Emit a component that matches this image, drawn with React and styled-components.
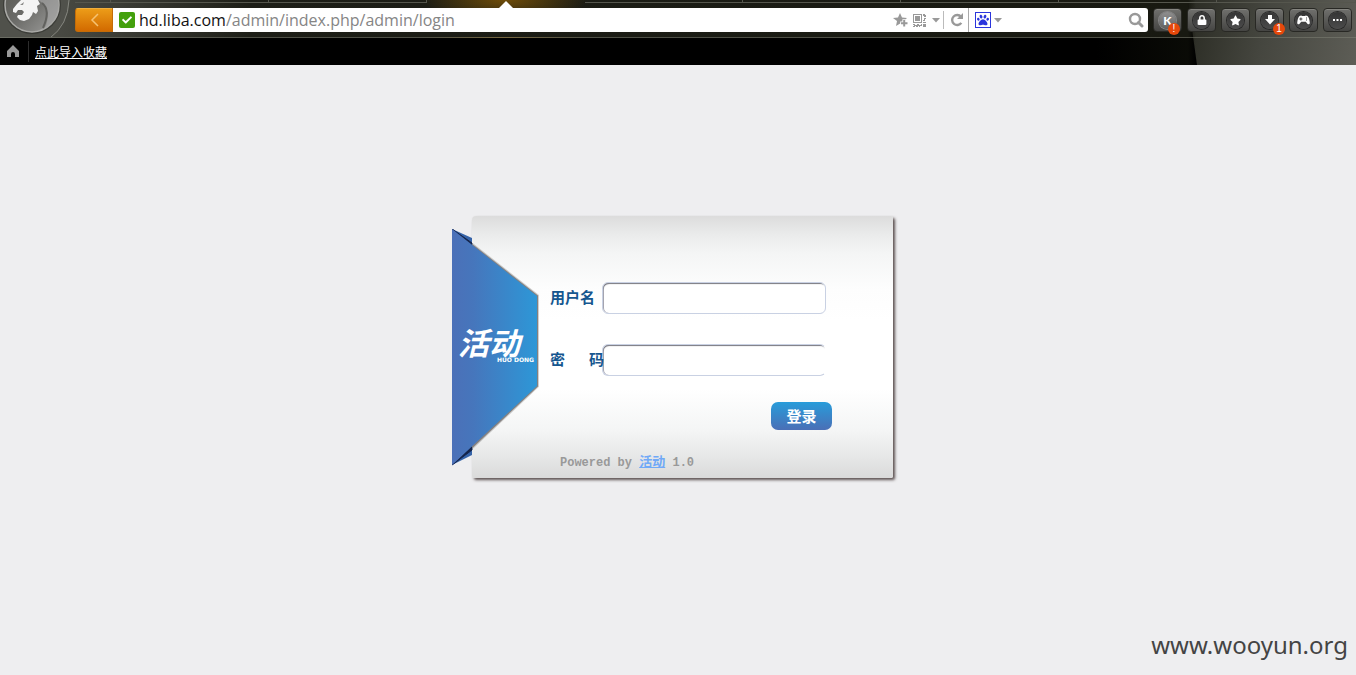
import React from "react";
import styled, { createGlobalStyle } from "styled-components";
import { FaLock, FaStar, FaPaw, FaCheck } from "react-icons/fa";

const GlobalStyle = createGlobalStyle`
  *, *::before, *::after { box-sizing: border-box; }
  html, body, #root { height: 100%; }
  body {
    margin: 0;
    background: #eeeef0;
    font-family: "Noto Sans", "Noto Sans CJK SC", sans-serif;
  }
  button { padding: 0; border: 0; cursor: pointer; font: inherit; }
  svg { display: block; flex: none; }
`;

const Page = styled.div`
  position: relative;
  display: flex;
  flex-direction: column;
  min-height: 100%;
`;

/* ---------- browser header ---------- */

const Header = styled.header`
  position: relative;
  background: #000;
  isolation: isolate;
  &::after {
    content: "";
    position: absolute;
    z-index: -1;
    inset: 0 0 0 auto;
    width: 168px;
    background: linear-gradient(100deg, #2a2b23 0, #45463f 45%, #5d5d56 100%);
    clip-path: polygon(0 0, 100% 0, 100% 100%, 9px 100%);
  }
`;

const Chrome = styled.div`
  display: flex;
  height: 38px;
  border-bottom: 1px solid rgba(130, 132, 120, 0.5);
  background:
    radial-gradient(ellipse 82px 22px at 505px 0, #6e4c08 0, transparent 100%),
    linear-gradient(90deg, #565751 0, #45463f 75px, #1d1e17 250px, #181911 calc(100% - 168px), transparent calc(100% - 160px));
`;

const MenuButton = styled.button`
  flex: none;
  width: 75px;
  height: 37px;
  overflow: hidden;
  background: transparent;
`;

const ChromeMain = styled.div`
  flex: 1;
  min-width: 0;
`;

const Tabs = styled.div`
  display: flex;
  height: 8px;
`;

const Tab = styled.div`
  flex: ${(p) => (p.$grow ? "1 1 0" : "none")};
  width: ${(p) => p.$width || 158}px;
  height: 3px;
  border-bottom: 1px solid #55564d;
  border-right: 1px solid #55564d;
`;

const ActiveTab = styled.div`
  display: flex;
  flex: none;
  align-items: flex-end;
  justify-content: center;
  width: 158px;
  height: 8px;
  &::after {
    content: "";
    border: 7px solid transparent;
    border-top: 0;
    border-bottom-color: #fff;
  }
`;

const Toolbar = styled.div`
  display: flex;
  height: 24px;
  padding-right: 4px;
`;

const BackButton = styled.button`
  display: grid;
  place-items: center;
  flex: none;
  width: 38px;
  border: 1px solid #c46c08;
  border-top-color: #f0ae3c;
  border-radius: 3px 0 0 3px;
  background: linear-gradient(#ec9c18, #d26a00);
`;

const AddressBar = styled.div`
  display: flex;
  flex: 1;
  align-items: center;
  min-width: 0;
  padding: 0 4px 0 6px;
  background: #fff;
  color: #999;
`;

const Verified = styled.span`
  display: grid;
  place-items: center;
  flex: none;
  width: 16px;
  height: 16px;
  margin-right: 4px;
  border-radius: 2px;
  background: #43a00c;
  color: #fff;
`;

const Host = styled.label`
  color: #111;
  font: 16px/24px "Open Sans", sans-serif;
`;

const PathInput = styled.input`
  flex: 1;
  min-width: 0;
  padding: 0;
  border: 0;
  outline: 0;
  background: transparent;
  color: #858585;
  font: 16px/24px "Open Sans", sans-serif;
`;

const IconButton = styled.button`
  display: grid;
  place-items: center;
  flex: none;
  width: ${(p) => p.$width || 18}px;
  height: 20px;
  background: transparent;
  color: #999;
`;

const Separator = styled.span`
  flex: none;
  width: 1px;
  height: 18px;
  margin-right: 5px;
  background: #bbb;
`;

const SearchBar = styled.div`
  display: flex;
  flex: none;
  align-items: center;
  width: 180px;
  margin-right: 5px;
  padding: 0 3px 0 6px;
  border-left: 1px solid #aaa;
  border-radius: 0 3px 3px 0;
  background: #fff;
`;

const Engine = styled.span`
  display: grid;
  place-items: center;
  flex: none;
  width: 16px;
  height: 16px;
  border: 1px solid #2b35dc;
  color: #2b35dc;
`;

const SearchInput = styled.input`
  flex: 1;
  min-width: 0;
  border: 0;
  outline: 0;
  background: transparent;
`;

const Tools = styled.div`
  display: flex;
  gap: 5px;
`;

const ToolButton = styled.button`
  position: relative;
  display: grid;
  place-items: center;
  width: 29px;
  height: 24px;
  border: 1px solid #282824;
  border-radius: 4px;
  background: linear-gradient(#70706d, #454543);
  box-shadow: inset 0 1px 0 #858580;
`;

const Disc = styled.span`
  display: grid;
  place-items: center;
  width: 17px;
  height: 17px;
  border-radius: 50%;
  background: ${(p) => (p.$light ? "linear-gradient(#8f8f8f, #626262)" : "linear-gradient(#343434, #4c4c4c)")};
  box-shadow: 0 0 0 1px ${(p) => (p.$light ? "#858585" : "#292929")};
  color: #fff;
  font: 900 12px/17px Lato, sans-serif;
`;

const Badge = styled.span`
  position: absolute;
  right: ${(p) => (p.$outer ? -2 : 1)}px;
  bottom: -4px;
  width: 12px;
  height: 12px;
  border-radius: 50%;
  background: #e6480b;
  color: #fff;
  font: 10px/12px "Liberation Sans", sans-serif;
  text-align: center;
`;

const Bookmarks = styled.nav`
  display: flex;
  align-items: center;
  height: 27px;
  padding-left: 6px;
  background: linear-gradient(90deg, transparent calc(100% - 260px), rgba(20, 21, 12, 0.5) calc(100% - 168px), transparent calc(100% - 160px));
`;

const BookmarkDivider = styled.span`
  width: 1px;
  height: 21px;
  margin: 0 6px 0 8px;
  background: #2c2c2c;
`;

const BookmarkLink = styled.a`
  color: #fff;
  font: 12px/16px "Noto Sans CJK SC", sans-serif;
`;

/* ---------- login card ---------- */

const Main = styled.main`
  flex: 1;
  padding-top: 151px;
`;

const Card = styled.form`
  position: relative;
  width: 452px;
  margin: 0 auto;
  padding: 0 11px 0 20px;
`;

const Panel = styled.div`
  display: flex;
  flex-direction: column;
  height: 262px;
  padding: 66px 61px 0 78px;
  border-radius: 4px 2px 2px 2px;
  background: linear-gradient(#dcdcdc 0, #eaebeb 7%, #f4f5f5 14%, #fdfdfd 28%, #fff 40%, #fff 66%, #f4f5f5 82%, #e6e7e7 92%, #dadada 100%);
  box-shadow: 2px 2px 3px #5c5151;
`;

const Ribbon = styled.div`
  position: absolute;
  top: 13px;
  left: 0;
  width: 88px;
`;

const Brand = styled.div`
  position: absolute;
  top: 98px;
  left: 6px;
  display: flex;
  flex-direction: column;
  align-items: flex-end;
  width: 76px;
  color: #fff;
`;

const BrandName = styled.span`
  align-self: flex-start;
  font: italic bold 31px/30px "Noto Sans CJK SC", sans-serif;
`;

const BrandSub = styled.small`
  font: bold 6px/6px "DejaVu Sans", sans-serif;
`;

const Field = styled.div`
  display: flex;
  align-items: center;
  height: 32px;
  margin-bottom: 30px;
`;

const FieldLabel = styled.label`
  position: relative;
  z-index: 1;
  flex: none;
  width: 52px;
  padding-bottom: 2px;
  color: #15568f;
  font: bold 15px/20px "Noto Sans CJK SC", sans-serif;
  white-space: nowrap;
`;

const Gap = styled.span`
  display: inline-block;
  width: 24px;
`;

const TextInput = styled.input`
  flex: none;
  width: 224px;
  height: 32px;
  padding: 0 8px;
  border: 1px solid #c9d1e3;
  border-right-color: ${(p) => (p.$openEnd ? "transparent" : "#c9d1e3")};
  border-radius: 6px;
  outline: 0;
  background: #fff;
  box-shadow: inset 1px 2px 1px -1px #77777f, inset 1px 0 0 #a9a9b5;
  font-size: 14px;
`;

const Submit = styled.button`
  align-self: flex-end;
  width: 61px;
  height: 28px;
  margin: -4px 0 0;
  border-radius: 7px;
  background: linear-gradient(#289cda, #4a6fb6);
  color: #fff;
  font: bold 15px/28px "Noto Sans CJK SC", sans-serif;
`;

const Powered = styled.p`
  margin: 23px 0 0 10px;
  color: #999;
  font: bold 12px/20px "Liberation Mono", "Noto Sans CJK SC", monospace;
`;

const PoweredLink = styled.a`
  color: #70a9f7;
  font-size: 13px;
`;

const Watermark = styled.div`
  position: absolute;
  right: 8px;
  bottom: 13px;
  color: #444;
  font: 24px/34px "Noto Sans", sans-serif;
`;

/* ---------- drawings ---------- */

const LionLogo = () => (
  <svg width="75" height="37" viewBox="0 0 75 37" aria-hidden="true">
    <defs>
      <linearGradient id="disc" x1="0" y1="0" x2="1" y2="1">
        <stop offset="0" stopColor="#55554f" />
        <stop offset=".5" stopColor="#6c6c69" />
        <stop offset="1" stopColor="#a0a09e" />
      </linearGradient>
    </defs>
    <path d="M0 0H69Q68 25 50 37H0Z" fill="#50514b" />
    <path d="M69 0Q68 25 50 38" fill="none" stroke="#85867f" />
    <circle cx="32" cy="5" r="29" fill="#3b3c37" />
    <circle cx="32" cy="5" r="27" fill="url(#disc)" stroke="#a9a9a6" strokeWidth="1.5" />
    <path d="M38 0Q52 7 46 26Q43 30 34 31Q52 30 58 12V0Z" fill="#aaa" opacity=".6" />
    <path d="M42 3Q51 10 43 28" fill="none" stroke="#62625f" strokeWidth="2" />
    <path d="M21 0L17 4L13 9L13 12L16 13L18 10L22 10L24 12L22 15L18 15L17 17L20 20L24 21L29 19L32 15L33 12L36 14L38 11L37 6L40 4L38 0Z" fill="#f4f4f4" />
    <path d="M20 5L24 2L23 5Z" fill="#8a8a88" />
  </svg>
);

const Caret = () => (
  <svg width="8" height="5" viewBox="0 0 8 5" fill="#999" aria-hidden="true">
    <path d="M0 0H8L4 4.5Z" />
  </svg>
);

const StarPlus = () => (
  <svg width="16" height="16" viewBox="0 0 16 16" fill="#999" aria-hidden="true">
    <path d="M7 1L9 5.5L14 6L12.6 7.2H9.4V9.5H7.2V11.6L3 14L4 9L0 6L5 5.5Z" />
    <path d="M10.2 8H12.2V10.3H14.5V12.3H12.2V14.5H10.2V12.3H8V10.3H10.2Z" />
  </svg>
);

const QrCode = () => (
  <svg width="13" height="13" viewBox="0 0 13 13" fill="#999" shapeRendering="crispEdges" aria-hidden="true">
    <path d="M0 0H9V9H0ZM1 1V8H8V1Z" fillRule="evenodd" />
    <path d="M2 2H7V7H2ZM10 0H12V1H13V3H11V2H10ZM11 4H13V5H12V7H10V6H11ZM10 8H13V9H10ZM0 10H2V11H4V10H6V11H8V10H9V12H7V13H6V12H5V13H3V12H2V13H0V12H1V11H0ZM10 10H13V13H10Z" />
  </svg>
);

const Reload = () => (
  <svg width="14" height="14" viewBox="0 0 14 14" aria-hidden="true">
    <path d="M11 3.8A5 5 0 1 0 11.3 9.8" fill="none" stroke="#999" strokeWidth="2.4" />
    <path d="M13 0V6H7Z" fill="#999" />
  </svg>
);

const Magnifier = () => (
  <svg width="16" height="16" viewBox="0 0 16 16" fill="none" stroke="#999" aria-hidden="true">
    <circle cx="7" cy="7" r="5" strokeWidth="2.4" />
    <path d="M10.5 10.5L14 14" strokeWidth="3" strokeLinecap="round" />
  </svg>
);

const HomeIcon = () => (
  <svg width="14" height="14" viewBox="0 0 14 14" fill="#999" aria-hidden="true">
    <path d="M7 0L13 6V12H9V9A2 2 0 0 0 5 9V12H1V6Z" />
  </svg>
);

const DownArrow = () => (
  <svg width="10" height="10" viewBox="0 0 10 10" fill="#fff" aria-hidden="true">
    <path d="M3 0H7V4H10L5 9.5L0 4H3Z" />
  </svg>
);

const Gamepad = () => (
  <svg width="13" height="10" viewBox="0 0 13 10" aria-hidden="true">
    <path d="M2.5 1Q4.5 0 5 1H8Q8.5 0 10.5 1Q12.5 3 12.8 8Q12.5 10 10.6 9L8.8 6.8H4.2L2.4 9Q.5 10 .2 8Q.5 3 2.5 1Z" fill="#fff" />
    <path d="M3.4 2.4H4.4V3.4H5.4V4.4H4.4V5.4H3.4V4.4H2.4V3.4H3.4ZM9 2.4H10V3.4H9ZM9 4.4H10V5.4H9Z" fill="#444" />
  </svg>
);

const Dots = () => (
  <svg width="9" height="3" viewBox="0 0 9 3" fill="#fff" aria-hidden="true">
    <path d="M0 0H2V2H0ZM3.5 0H5.5V2H3.5ZM7 0H9V2H7Z" />
  </svg>
);

const RibbonShape = () => (
  <svg width="88" height="240" viewBox="0 0 88 240" aria-hidden="true">
    <defs>
      <linearGradient id="ribbon">
        <stop offset="0" stopColor="#4b70b8" />
        <stop offset=".25" stopColor="#4676bc" />
        <stop offset="1" stopColor="#2d97d7" />
      </linearGradient>
    </defs>
    <path d="M0 0L20 9V17Z" fill="#3563a8" />
    <path d="M0 0L20 14V17Z" fill="#14244a" stroke="#14244a" />
    <path d="M0 236L20 226V217Z" fill="#3563a8" />
    <path d="M0 236L20 221V217Z" fill="#14244a" stroke="#14244a" />
    <path d="M20 16L85 67V157L20 218" fill="none" stroke="#777" strokeOpacity=".35" strokeWidth="4" />
    <path d="M20 16L85 67V157L20 218" fill="none" stroke="#85807e" strokeWidth="2" />
    <path d="M0 0L85 67V157L0 236Z" fill="url(#ribbon)" />
  </svg>
);

const tools = [
  { label: "K", icon: "K", badge: "!", light: true },
  { label: "Lock", icon: <FaLock size={10} /> },
  { label: "Favourites", icon: <FaStar size={11} /> },
  { label: "Downloads", icon: <DownArrow />, badge: "1", outer: true },
  { label: "Games", icon: <Gamepad /> },
  { label: "More", icon: <Dots /> },
];

export default function App() {
  return (
    <Page>
      <GlobalStyle />
      <Header>
        <Chrome>
          <MenuButton aria-label="Menu"><LionLogo /></MenuButton>
          <ChromeMain>
            <Tabs>
              <Tab $width={36} />
              <Tab />
              <Tab />
              <ActiveTab />
              <Tab />
              <Tab />
              <Tab />
              <Tab />
              <Tab $grow />
            </Tabs>
            <Toolbar>
              <BackButton aria-label="Back">
                <svg width="9" height="14" viewBox="0 0 9 14" fill="none" aria-hidden="true">
                  <path d="M8 1L2 7L8 13" stroke="#f6c272" strokeWidth="1.5" />
                </svg>
              </BackButton>
              <AddressBar>
                <Verified><FaCheck size={10} /></Verified>
                <Host htmlFor="path">hd.liba.com</Host>
                <PathInput id="path" defaultValue="/admin/index.php/admin/login" />
                <IconButton aria-label="Add favourite"><StarPlus /></IconButton>
                <IconButton aria-label="QR code"><QrCode /></IconButton>
                <IconButton aria-label="Address options" $width={15}><Caret /></IconButton>
                <Separator />
                <IconButton aria-label="Reload" $width={15}><Reload /></IconButton>
              </AddressBar>
              <SearchBar>
                <Engine><FaPaw size={12} /></Engine>
                <IconButton aria-label="Search engine" $width={13}><Caret /></IconButton>
                <SearchInput aria-label="Search" />
                <IconButton aria-label="Go"><Magnifier /></IconButton>
              </SearchBar>
              <Tools>
                {tools.map((t) => (
                  <ToolButton key={t.label} aria-label={t.label}>
                    <Disc $light={t.light}>{t.icon}</Disc>
                    {t.badge && <Badge $outer={t.outer}>{t.badge}</Badge>}
                  </ToolButton>
                ))}
              </Tools>
            </Toolbar>
          </ChromeMain>
        </Chrome>
        <Bookmarks>
          <HomeIcon />
          <BookmarkDivider />
          <BookmarkLink href="#">点此导入收藏</BookmarkLink>
        </Bookmarks>
      </Header>

      <Main>
        <Card onSubmit={(e) => e.preventDefault()}>
          <Panel>
            <Field>
              <FieldLabel htmlFor="user">用户名</FieldLabel>
              <TextInput id="user" type="text" />
            </Field>
            <Field>
              <FieldLabel htmlFor="pass">密<Gap />码</FieldLabel>
              <TextInput id="pass" type="password" $openEnd />
            </Field>
            <Submit type="submit">登录</Submit>
            <Powered>Powered by <PoweredLink href="#">活动</PoweredLink> 1.0</Powered>
          </Panel>
          <Ribbon>
            <RibbonShape />
            <Brand>
              <BrandName>活动</BrandName>
              <BrandSub>HUO DONG</BrandSub>
            </Brand>
          </Ribbon>
        </Card>
      </Main>
      <Watermark>www.wooyun.org</Watermark>
    </Page>
  );
}
